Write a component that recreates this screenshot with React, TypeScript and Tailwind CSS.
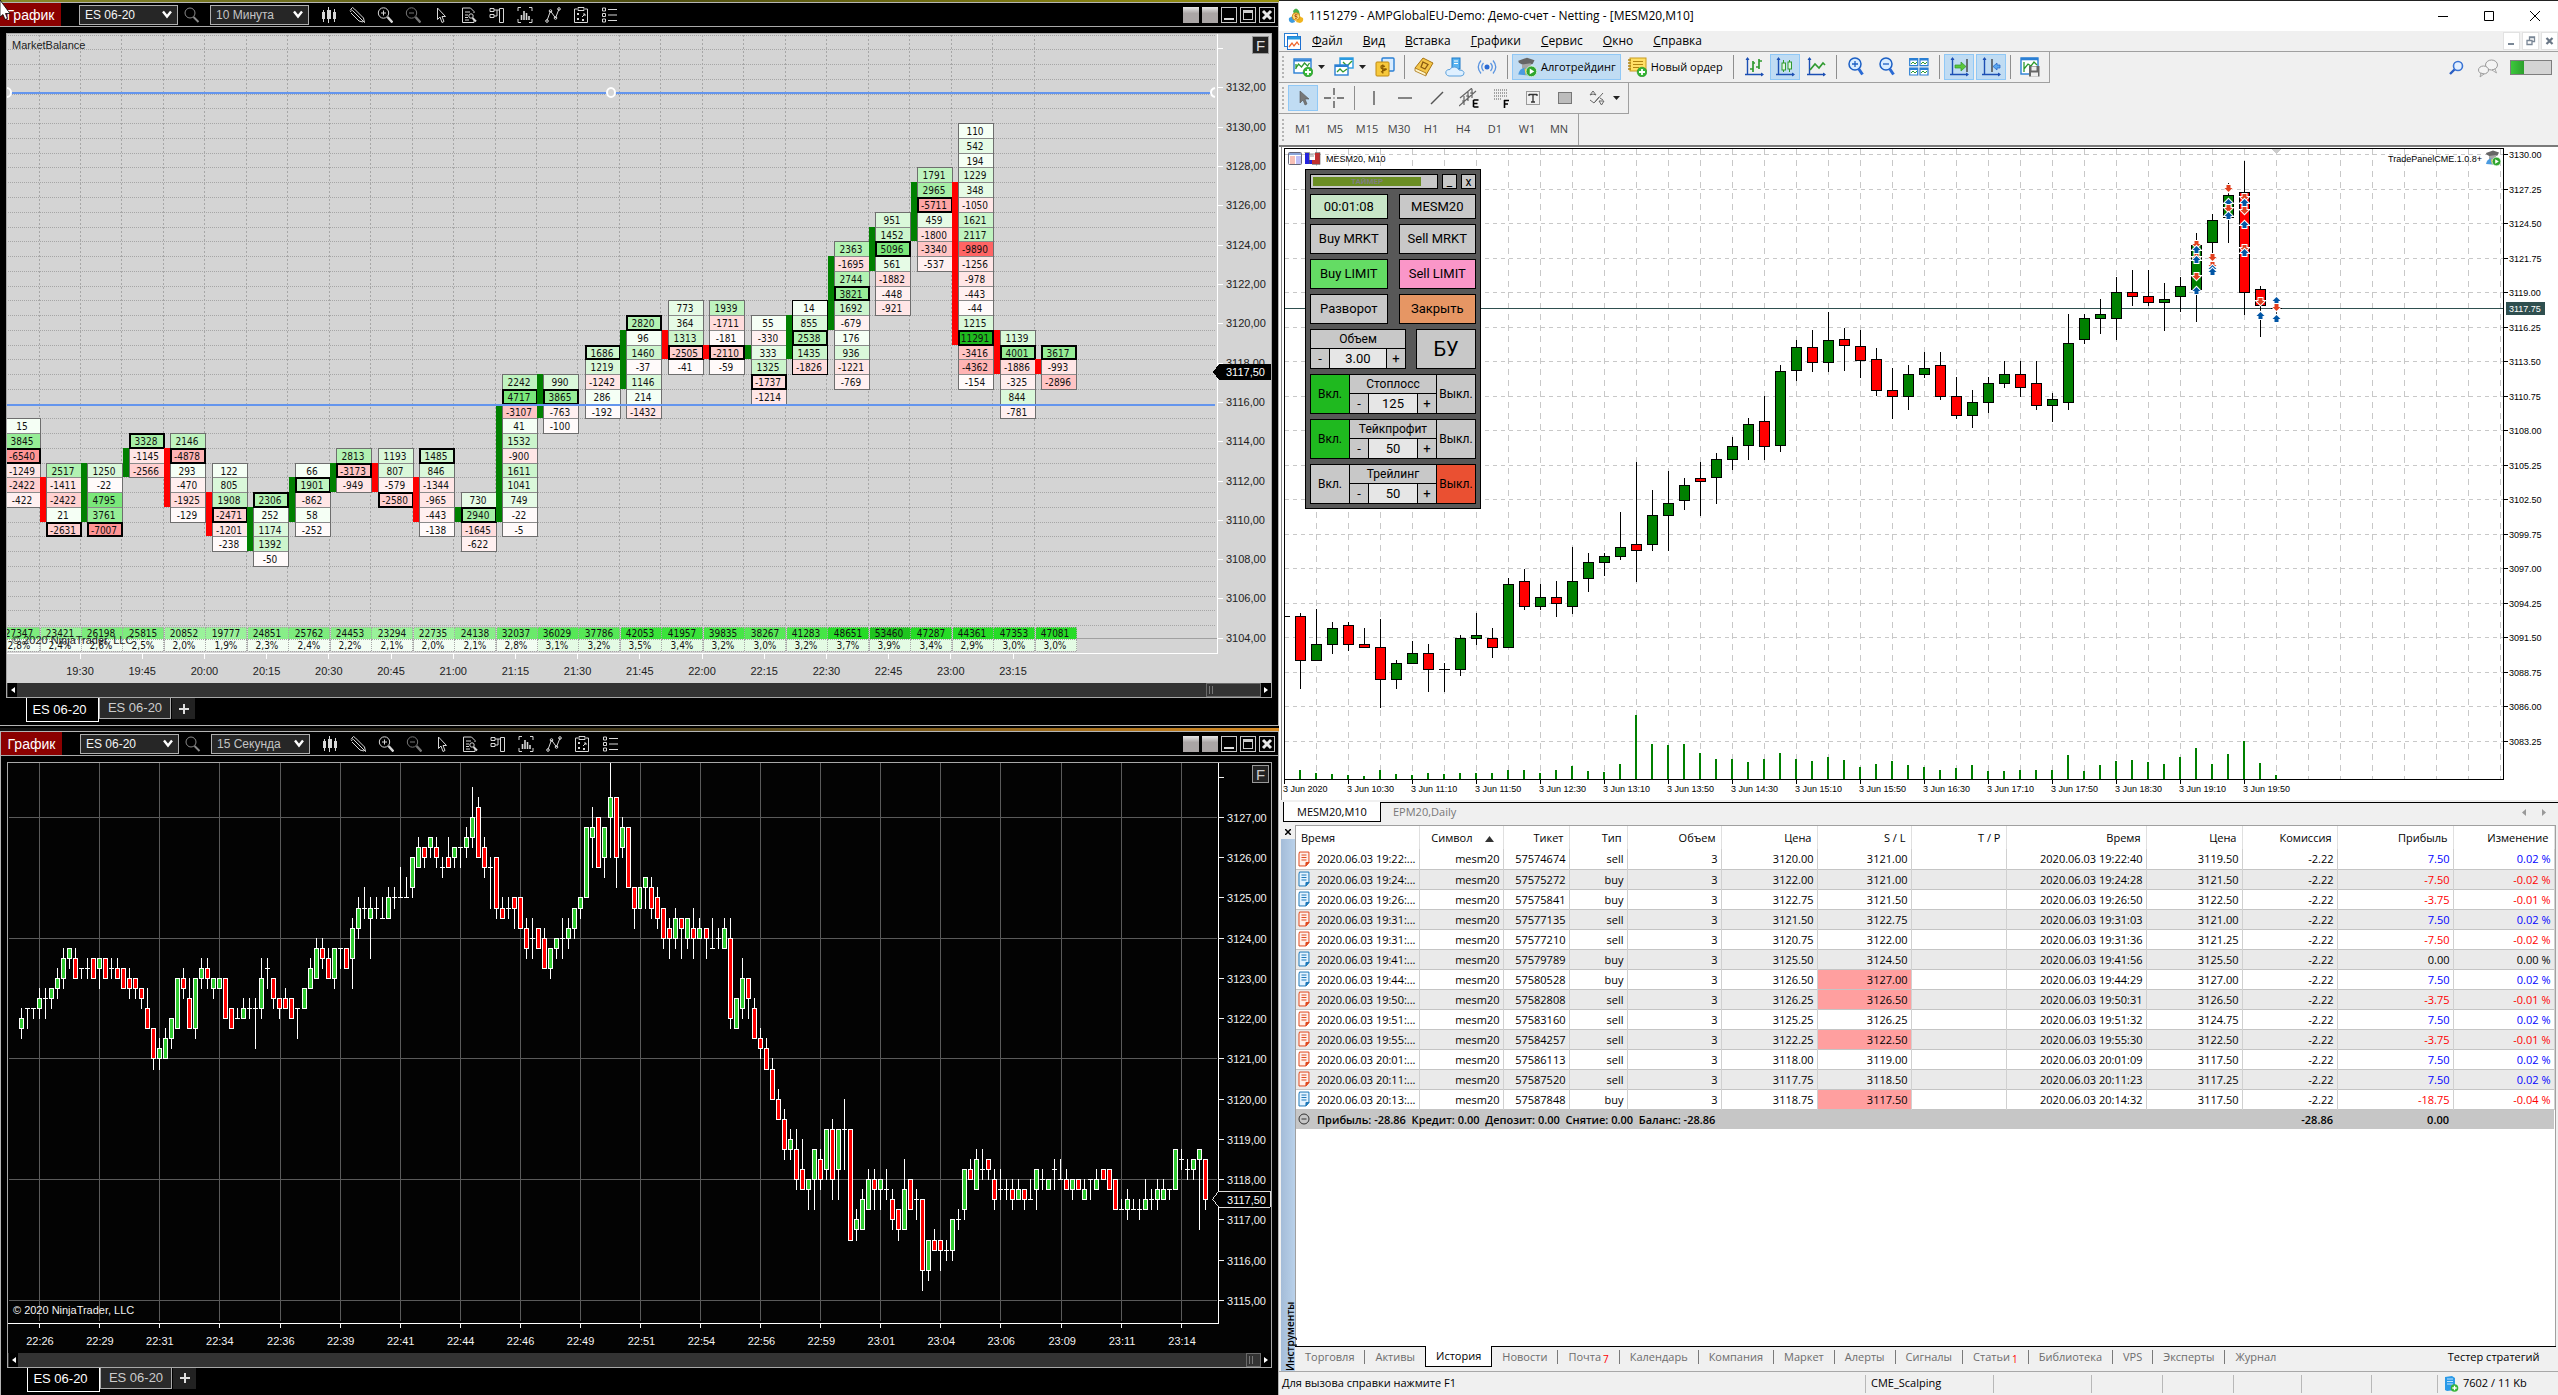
import type { ReactNode } from 'react';

type Bar = [number, number, number, number, number];

/* ---------- footprint chart data: [top row, cells, highlighted cell, bar from, bar to, bar direction] ---------- */
type Column = [number, number[], number, number, number, number];

const COLUMNS: Column[] = [
  [25, [15, 3845, -6540, -1249, -2422, -422], 2, 0, 0, 0],
  [28, [2517, -1411, -2422, 21, -2631], 4, 29, 32, -1],
  [28, [1250, -22, 4795, 3761, -7007], 4, 28, 32, 1],
  [26, [3328, -1145, -2566], 0, 27, 29, 1],
  [26, [2146, -4878, 293, -470, -1925, -129], 1, 27, 31, -1],
  [28, [122, 805, 1908, -2471, -1201, -238], 3, 30, 33, -1],
  [30, [2306, 252, 1174, 1392, -50], 0, 31, 34, 1],
  [28, [66, 1901, -862, 58, -252], 1, 29, 32, 1],
  [27, [2813, -3173, -949], 1, 28, 30, 1],
  [27, [1193, 807, -579, -2580], 3, 28, 30, -1],
  [27, [1485, 846, -1344, -965, -443, -138], 0, 29, 32, -1],
  [30, [730, 2940, -1645, -622], 1, 31, 32, 1],
  [22, [2242, 4717, -3107, 41, 1532, -900, 1611, 1041, 749, -22, -5], 1, 24, 32, 1],
  [22, [990, 3865, -763, -100], 1, 22, 25, 1],
  [20, [1686, 1219, -1242, 286, -192], 0, 0, 0, 0],
  [18, [2820, 96, 1460, -37, 1146, 214, -1432], 0, 19, 23, 1],
  [17, [773, 364, 1313, -2505, -41], 3, 19, 21, -1],
  [17, [1939, -1711, -181, -2110, -59], 3, 20, 21, -1],
  [18, [55, -330, 333, 1325, -1737, -1214], 4, 20, 21, 1],
  [17, [14, 855, 2538, 1435, -1826], 2, 18, 21, 1],
  [13, [2363, -1695, 2744, 3821, 1692, -679, 176, 936, -1221, -769], 3, 14, 19, 1],
  [11, [951, 1452, 5096, 561, -1882, -448, -921], 2, 12, 15, 1],
  [8, [1791, 2965, -5711, 459, -1800, -3340, -537], 2, 9, 13, 1],
  [5, [110, 542, 194, 1229, 348, -1050, 1621, 2117, -9890, -1256, -978, -443, -44, 1215, 11291, -3416, -4362, -154], 14, 9, 20, -1],
  [19, [1139, 4001, -1886, -325, 844, -781], 1, 19, 22, -1],
  [20, [3617, -993, -2896], 0, 21, 22, -1],
];

const VOLUMES = [
  27347, 23421, 26198, 25815, 20852, 19777, 24851, 25762, 24453, 23294, 22735, 24138, 32037,
  36029, 37786, 42053, 41957, 39835, 38267, 41283, 48651, 53460, 47287, 44361, 47353, 47081,
];
const SHARES = [
  '2,8%', '2,4%', '2,6%', '2,5%', '2,0%', '1,9%', '2,3%', '2,4%', '2,2%', '2,1%', '2,0%', '2,1%', '2,8%',
  '3,1%', '3,2%', '3,5%', '3,4%', '3,2%', '3,0%', '3,2%', '3,7%', '3,9%', '3,4%', '2,9%', '3,0%', '3,0%',
];
const TIMES_10M = ['19:30', '19:45', '20:00', '20:15', '20:30', '20:45', '21:00', '21:15', '21:30', '21:45', '22:00', '22:15', '22:30', '22:45', '23:00', '23:15'];

/* ---------- 15 second chart: [high, body top, body bottom, low, direction], ticks below 3127 ---------- */
const TICKS: Bar[] = [
  [19, 20, 21, 22, 1], [19, 19, 19, 21, 0], [19, 19, 19, 20, 0], [17, 18, 19, 20, 1], [17, 18, 18, 20, 0], [17, 17, 18, 19, 1], [15, 16, 17, 18, 1], [13, 14, 16, 17, 1],
  [13, 13, 14, 15, 1], [13, 14, 16, 16, -1], [15, 15, 15, 16, 0], [14, 15, 15, 16, 0], [14, 14, 16, 16, -1], [14, 14, 15, 17, 1], [14, 14, 16, 16, -1], [14, 15, 15, 16, 0],
  [14, 15, 16, 16, -1], [15, 15, 17, 17, -1], [15, 16, 17, 18, -1], [16, 16, 17, 18, -1], [17, 17, 18, 19, -1], [17, 19, 21, 21, -1], [21, 21, 24, 25, -1], [22, 23, 24, 25, 1],
  [21, 22, 24, 24, 1], [20, 20, 22, 23, 1], [16, 16, 21, 21, 1], [15, 16, 17, 18, -1], [16, 18, 21, 21, -1], [16, 16, 21, 22, 1], [14, 15, 16, 17, 1], [14, 15, 16, 17, -1],
  [16, 16, 17, 18, 1], [16, 16, 17, 17, 1], [16, 16, 20, 20, -1], [19, 19, 21, 21, -1], [19, 20, 20, 20, 0], [18, 19, 20, 20, 1], [18, 19, 19, 20, 0], [18, 19, 19, 23, 0],
  [14, 16, 19, 20, 1], [14, 15, 15, 17, 0], [16, 16, 18, 19, -1], [18, 18, 19, 20, -1], [17, 18, 19, 19, -1], [18, 18, 20, 20, -1], [19, 19, 19, 22, 0], [17, 17, 19, 19, 1],
  [14, 15, 17, 17, 1], [12, 13, 16, 16, 1], [12, 13, 14, 15, -1], [13, 14, 16, 16, -1], [13, 13, 16, 17, 1], [13, 13, 13, 15, 0], [13, 13, 15, 15, -1], [10, 11, 14, 17, 1],
  [8, 9, 11, 12, 1], [7, 9, 9, 10, 0], [8, 9, 10, 14, 1], [8, 9, 9, 10, 0], [8, 10, 10, 10, 0], [7, 8, 10, 10, 1], [7, 8, 8, 9, 0], [5, 8, 8, 8, 0],
  [6, 8, 8, 8, 0], [4, 4, 7, 8, 1], [2, 3, 5, 5, 1], [3, 3, 4, 5, -1], [2, 2, 3, 4, 1], [2, 3, 4, 5, -1], [4, 5, 5, 6, 0], [2, 4, 5, 5, -1],
  [3, 3, 4, 5, 1], [3, 3, 3, 5, 0], [1, 2, 3, 4, 1], [-3, 0, 2, 3, 1], [-2, -1, 4, 4, -1], [2, 3, 5, 6, -1], [4, 5, 5, 9, 0], [4, 4, 9, 10, -1],
  [8, 9, 10, 10, -1], [8, 9, 9, 10, 0], [8, 8, 9, 11, -1], [8, 8, 11, 11, -1], [10, 11, 13, 14, -1], [10, 12, 12, 14, 0], [11, 11, 13, 13, -1], [11, 12, 15, 15, -1],
  [13, 13, 15, 16, 1], [12, 12, 13, 14, 1], [10, 12, 12, 14, 0], [10, 11, 12, 13, 1], [9, 9, 11, 12, 1], [8, 8, 9, 10, 1], [1, 1, 8, 8, 1], [-1, 1, 2, 5, 1],
  [0, 0, 5, 5, -1], [1, 1, 4, 6, 1], [-6, -2, 0, 4, 1], [-2, -2, 4, 7, -1], [0, 1, 3, 4, 1], [1, 1, 7, 7, -1], [7, 7, 9, 11, -1], [5, 7, 9, 10, 1],
  [6, 6, 7, 9, 1], [6, 7, 9, 10, -1], [7, 8, 10, 11, -1], [9, 9, 12, 13, -1], [10, 11, 12, 14, -1], [9, 10, 12, 13, 1], [10, 10, 11, 14, -1], [10, 10, 12, 13, 1],
  [9, 11, 12, 14, -1], [10, 11, 12, 12, 1], [11, 11, 12, 14, -1], [10, 13, 13, 13, 0], [11, 12, 12, 13, 0], [10, 11, 13, 13, 1], [10, 12, 20, 21, -1], [18, 18, 21, 21, 1],
  [14, 16, 19, 20, 1], [16, 16, 18, 20, -1], [18, 19, 22, 22, -1], [21, 22, 23, 24, -1], [22, 23, 25, 25, -1], [24, 25, 28, 28, -1], [27, 28, 30, 30, -1], [29, 30, 33, 34, -1],
  [31, 32, 33, 34, 1], [31, 33, 36, 37, -1], [32, 35, 37, 37, -1], [36, 36, 37, 39, 1], [33, 33, 36, 39, 1], [33, 34, 36, 37, -1], [31, 31, 35, 36, 1], [30, 31, 36, 38, -1],
  [31, 31, 35, 38, 1], [28, 31, 31, 35, 0], [31, 31, 42, 42, -1], [39, 40, 41, 42, 1], [37, 38, 41, 41, 1], [35, 36, 39, 39, 1], [35, 36, 37, 39, -1], [36, 36, 37, 39, 1],
  [35, 37, 37, 38, 0], [37, 38, 40, 41, -1], [39, 39, 41, 42, -1], [34, 37, 41, 41, 1], [36, 36, 39, 39, -1], [37, 38, 38, 40, 0], [38, 38, 45, 47, -1], [42, 42, 45, 46, 1],
  [41, 42, 43, 43, -1], [42, 42, 43, 45, -1], [42, 43, 43, 44, 0], [40, 40, 43, 44, 1], [39, 40, 40, 41, 0], [35, 35, 39, 40, 1], [34, 35, 36, 36, -1], [33, 34, 37, 37, 1],
  [33, 35, 35, 36, 0], [34, 34, 35, 36, -1], [35, 36, 38, 39, -1], [35, 37, 37, 38, 0], [36, 37, 37, 38, 0], [36, 37, 38, 39, -1], [36, 37, 38, 38, 1], [37, 37, 38, 39, -1],
  [36, 38, 38, 38, 0], [35, 35, 37, 39, 1], [35, 36, 36, 37, 0], [36, 36, 37, 37, 1], [34, 35, 35, 37, 0], [34, 36, 36, 36, 0], [35, 36, 37, 37, -1], [36, 36, 37, 38, 1],
  [36, 36, 37, 37, -1], [36, 37, 38, 38, 1], [36, 36, 36, 38, 0], [35, 36, 37, 37, 1], [35, 35, 36, 36, -1], [35, 35, 37, 37, -1], [36, 36, 39, 39, -1], [38, 39, 39, 39, 0],
  [37, 38, 39, 40, 1], [38, 39, 39, 39, 0], [38, 39, 39, 40, 0], [36, 38, 39, 39, 1], [37, 38, 38, 39, 0], [36, 37, 38, 39, 1], [36, 37, 38, 38, 1], [37, 37, 37, 38, 0],
  [33, 33, 37, 37, 1], [33, 34, 34, 35, 0], [34, 35, 35, 36, 0], [34, 34, 35, 36, 1], [33, 33, 34, 41, 1], [34, 34, 38, 39, -1],
];
const TIMES_15S = ['22:26', '22:29', '22:31', '22:34', '22:36', '22:39', '22:41', '22:44', '22:46', '22:49', '22:51', '22:54', '22:56', '22:59', '23:01', '23:04', '23:06', '23:09', '23:11', '23:14'];

/* ---------- MESM20 chart: [high, body top, body bottom, low, direction] in chart units ---------- */
const CANDLES: Bar[] = [
  [613, 616, 661, 689, -1], [609, 644, 661, 661, 1], [622, 628, 645, 654, 1], [622, 625, 645, 651, -1], [628, 644, 648, 648, -1], [619, 647, 680, 708, -1],
  [660, 663, 680, 689, 1], [641, 653, 664, 664, 1], [644, 653, 670, 692, -1], [663, 669, 669, 692, 0], [635, 638, 670, 676, 1], [613, 635, 639, 645, 1],
  [628, 638, 648, 658, -1], [578, 584, 648, 648, 1], [569, 581, 607, 610, -1], [584, 597, 607, 610, 1], [581, 597, 604, 617, -1], [547, 581, 607, 614, 1],
  [553, 562, 579, 592, 1], [553, 556, 563, 576, 1], [512, 547, 557, 560, 1], [462, 544, 551, 582, -1], [490, 515, 545, 551, 1], [471, 503, 516, 551, 1],
  [478, 485, 501, 510, 1], [462, 478, 482, 516, -1], [453, 459, 478, 504, 1], [437, 446, 460, 470, 1], [418, 424, 446, 460, 1], [396, 421, 447, 460, -1],
  [365, 371, 446, 452, 1], [340, 347, 371, 381, 1], [330, 347, 363, 372, -1], [312, 340, 363, 372, 1], [328, 339, 346, 371, -1], [330, 346, 361, 378, -1],
  [348, 359, 391, 396, -1], [368, 390, 397, 419, -1], [365, 374, 397, 410, 1], [352, 368, 375, 378, 1], [352, 365, 397, 400, -1], [377, 396, 416, 419, -1],
  [390, 402, 416, 428, 1], [377, 383, 403, 413, 1], [361, 374, 384, 388, 1], [361, 374, 388, 397, -1], [361, 383, 406, 410, -1], [393, 399, 406, 422, 1],
  [314, 343, 403, 410, 1], [314, 318, 340, 344, 1], [299, 314, 319, 334, 1], [277, 292, 319, 340, 1], [270, 292, 297, 306, -1], [270, 296, 303, 306, -1],
  [283, 299, 303, 331, 1], [277, 286, 297, 312, 1], [233, 245, 290, 322, 1], [214, 220, 243, 253, 1], [183, 195, 218, 243, 1], [161, 192, 293, 315, -1],
  [286, 289, 306, 337, -1], [296, 308, 308, 315, 0],
];
const MT_VOLUMES = [
  9, 6, 5, 4, 3, 9, 5, 4, 6, 5, 6, 6, 6, 9, 9, 6, 9, 13, 8, 7, 15, 64, 35, 34, 35, 26, 20, 20, 17, 20, 26,
  20, 18, 22, 19, 12, 15, 18, 14, 12, 9, 11, 14, 8, 8, 9, 9, 9, 24, 8, 14, 18, 19, 17, 15, 22, 31, 15, 25, 38, 16, 4,
];
const MT_TIMES = ['10:30', '11:10', '11:50', '12:30', '13:10', '13:50', '14:30', '15:10', '15:50', '16:30', '17:10', '17:50', '18:30', '19:10', '19:50'];

/* deal marks: [bar, y, side] */
const DEALS: [number, number, number][] = [
  [56, 244, -1], [56, 250, 1], [56, 257, -1], [56, 260, 1], [56, 276, -1], [56, 291, 1],
  [57, 257, -1], [57, 265, -1], [57, 269, 1], [57, 272, 1],
  [58, 188, -1], [58, 203, 1], [58, 208, -1], [58, 216, 1],
  [59, 197, -1], [59, 203, 1], [59, 210, -1], [59, 225, 1], [59, 248, -1], [59, 253, 1],
  [60, 301, -1], [60, 316, 1],
  [61, 301, 1], [61, 307, -1], [61, 319, 1],
];

const TRADES = [
  ['2020.06.03 19:22:...', '57574674', 'sell', '3120.00', '3121.00', '2020.06.03 19:22:40', '3119.50', '7.50', '0.02 %', ''],
  ['2020.06.03 19:24:...', '57575272', 'buy', '3122.00', '3121.00', '2020.06.03 19:24:28', '3121.50', '-7.50', '-0.02 %', ''],
  ['2020.06.03 19:26:...', '57575841', 'buy', '3122.75', '3121.50', '2020.06.03 19:26:50', '3122.50', '-3.75', '-0.01 %', ''],
  ['2020.06.03 19:31:...', '57577135', 'sell', '3121.50', '3122.75', '2020.06.03 19:31:03', '3121.00', '7.50', '0.02 %', ''],
  ['2020.06.03 19:31:...', '57577210', 'sell', '3120.75', '3122.00', '2020.06.03 19:31:36', '3121.25', '-7.50', '-0.02 %', ''],
  ['2020.06.03 19:41:...', '57579789', 'buy', '3125.50', '3124.50', '2020.06.03 19:41:56', '3125.50', '0.00', '0.00 %', ''],
  ['2020.06.03 19:44:...', '57580528', 'buy', '3126.50', '3127.00', '2020.06.03 19:44:29', '3127.00', '7.50', '0.02 %', 'hit'],
  ['2020.06.03 19:50:...', '57582808', 'sell', '3126.25', '3126.50', '2020.06.03 19:50:31', '3126.50', '-3.75', '-0.01 %', 'hit'],
  ['2020.06.03 19:51:...', '57583160', 'sell', '3125.25', '3126.25', '2020.06.03 19:51:32', '3124.75', '7.50', '0.02 %', ''],
  ['2020.06.03 19:55:...', '57584257', 'sell', '3122.25', '3122.50', '2020.06.03 19:55:30', '3122.50', '-3.75', '-0.01 %', 'hit'],
  ['2020.06.03 20:01:...', '57586113', 'sell', '3118.00', '3119.00', '2020.06.03 20:01:09', '3117.50', '7.50', '0.02 %', ''],
  ['2020.06.03 20:11:...', '57587520', 'sell', '3117.75', '3118.50', '2020.06.03 20:11:23', '3117.25', '7.50', '0.02 %', ''],
  ['2020.06.03 20:13:...', '57587848', 'buy', '3118.75', '3117.50', '2020.06.03 20:14:32', '3117.50', '-18.75', '-0.04 %', 'hit'],
];

const ARIAL = "font-['Liberation_Sans',Arial,sans-serif]";
const SEGOE = "font-['Open_Sans','Noto_Sans',sans-serif]";

function cellColor(v: number) {
  const up: [number, string][] = [[300, '#f5fff5'], [800, '#e6fbe6'], [1250, '#daf8da'], [1750, '#ccf5cc'], [2250, '#bff3bf'], [2850, '#b2f2b2'], [3400, '#a6efa6'], [4300, '#96ed96'], [6000, '#7ae87a'], [99999, '#1fba1f']];
  const down: [number, string][] = [[260, '#fffafa'], [800, '#fff0f0'], [1450, '#ffe6e6'], [2000, '#ffdcdc'], [2700, '#ffd0d0'], [3600, '#ffc4c4'], [5000, '#ffb4b4'], [6000, '#ffa5a5'], [8000, '#ff9494'], [99999, '#ff6464']];
  const scale = v >= 0 ? up : down;
  return scale.find(([limit]) => Math.abs(v) <= limit)![1];
}

function volumeColor(v: number) {
  if (v > 50000) return '#1fc41f';
  if (v > 44000) return '#26dc26';
  if (v > 41500) return '#3ae33a';
  if (v > 38500) return '#46e646';
  if (v > 34000) return '#56e856';
  if (v > 30000) return '#6aea6a';
  if (v > 25500) return '#7dec7d';
  if (v > 24000) return '#88ee88';
  return '#9af29a';
}

function FootprintChart() {
  const rowY = (r: number) => Math.round(49.4 + 14.76 * r);
  const colX = (c: number) => Math.round(38.5 + 41.46 * c);
  const priceY = (p: number) => Math.round(637.8 - (p - 3104) * 19.66);
  return (
    <svg viewBox="7 34 1264 649" className={`block w-full h-auto bg-[#d4d4d4] text-[11px] ${ARIAL}`} shapeRendering="crispEdges">
      <g stroke="#a6a6a6" strokeDasharray="1 1">
        {Array.from({ length: 41 }, (_, i) => <line key={i} x1="8" x2="1215" y1={rowY(i - 1) + 0.5} y2={rowY(i - 1) + 0.5} />)}
        {Array.from({ length: 25 }, (_, i) => <line key={i} x1={colX(i) + 0.5} x2={colX(i) + 0.5} y1="35" y2="651" strokeDasharray="2 2" />)}
      </g>
      <line x1="7" x2="1217" y1="638.5" y2="638.5" stroke="#a0a0a0" />
      <text x="12" y="49" fill="#222">MarketBalance</text>

      {COLUMNS.map(([top, cells, mark, from, to, dir], c) => {
        const right = colX(c) + 1;
        const left = right - 35;
        const frame = c === 19 ? '#000' : '#6e6e6e';
        return (
          <g key={c}>
            {dir !== 0 && <rect x={left - 6} width="6" y={rowY(from)} height={rowY(to) - rowY(from)} fill={dir > 0 ? '#008000' : '#ff0000'} />}
            {cells.map((v, i) => (
              <rect key={i} x={left} width="35" y={rowY(top + i)} height={rowY(top + i + 1) - rowY(top + i) + 1} fill={cellColor(v)} stroke="none" />
            ))}
            {cells.map((v, i) => (
              <line key={i} x1={left} x2={right} y1={rowY(top + i) + 0.5} y2={rowY(top + i) + 0.5} stroke="#8a8a8a" />
            ))}
            <rect x={left + 0.5} width="35" y={rowY(top) + 0.5} height={rowY(top + cells.length) - rowY(top)} fill="none" stroke={frame} />
            <rect x={left + 1} width="34" y={rowY(top + mark) + 1} height={rowY(top + mark + 1) - rowY(top + mark) - 1} fill="none" stroke="#000" strokeWidth="2" />
          </g>
        );
      })}

      {/* column totals */}
      {VOLUMES.map((v, c) => (
        <g key={c} stroke="#a6a6a6" strokeDasharray="1 1">
          <rect x={colX(c - 1) + 1.5} width="41" y="627" height="12" fill={volumeColor(v)} />
          <rect x={colX(c - 1) + 1.5} width="41" y="639" height="12" fill={v > 36000 ? '#e4fbe4' : '#f3fdf3'} />
        </g>
      ))}
      <g className="font-['DejaVu_Sans_Condensed','DejaVu_Sans',sans-serif] text-[10px]" textAnchor="middle" fill="#111">
        {COLUMNS.map(([top, cells], c) => cells.map((v, i) => (
          <text key={`${c}-${i}`} x={colX(c) - 17} y={rowY(top + i) + 12}>{v}</text>
        )))}
        {VOLUMES.map((v, c) => <text key={c} x={colX(c) - 20} y="637">{v}</text>)}
        {SHARES.map((s, c) => <text key={c} x={colX(c) - 20} y="649">{s}</text>)}
      </g>
      <text x="12" y="644" fill="#222">© 2020 NinjaTrader, LLC</text>

      {/* horizontal levels */}
      <rect x="7" y="92" width="1206" height="2" fill="#6495ed" />
      <rect x="7" y="404" width="1208" height="2" fill="#6495ed" />
      <g fill="#d4d4d4" stroke="#fff" strokeWidth="2" shapeRendering="auto">
        <ellipse cx="7" cy="92.5" rx="4" ry="4.5" />
        <ellipse cx="611" cy="92.5" rx="4" ry="4.5" />
        <path d="M1215 88q-4 1-4 4.500q0 3.500 4 4.500" />
      </g>

      <path d="M1217.500 34V653.500H7" fill="none" stroke="#fff" />
      {Array.from({ length: 16 }, (_, i) => 3104 + i * 2).map((p) => (
        <g key={p}>
          <line x1="1217" x2="1223" y1={priceY(p) + 0.5} y2={priceY(p) + 0.5} stroke="#fff" />
          {p < 3134 && <text x="1226" y={priceY(p) + 4} fill="#222">{`${p},00`}</text>}
        </g>
      ))}
      <path d="M1213 372l6-8h52v16h-52z" fill="#000" />
      <text x="1226" y="376" fill="#fff">3117,50</text>
      {TIMES_10M.map((t, i) => (
        <g key={t}>
          <line x1={Math.round(79.6 + i * 62.2) + 0.5} x2={Math.round(79.6 + i * 62.2) + 0.5} y1="654" y2="659" stroke="#fff" />
          <text x={80 + i * 62.2} y="675" textAnchor="middle" fill="#222">{t}</text>
        </g>
      ))}
      <rect x="1252.500" y="36.500" width="16" height="17" fill="#222" stroke="#999" />
      <text x="1256" y="51" fill="#ddd" className="text-[15px]">F</text>
    </svg>
  );
}

function SecondsChart() {
  const tickY = (n: number) => Math.round(817 + n * 10.06);
  const barX = (k: number) => Math.round(20.8 + k * 6.015);
  const gridX = (i: number) => Math.round(39 + i * 60.15);
  return (
    <svg viewBox="8 763 1264 590" className={`block w-full h-auto bg-[#030303] text-[11px] ${ARIAL}`} shapeRendering="crispEdges">
      <g stroke="#5a5a5a">
        {TIMES_15S.map((t, i) => <line key={t} x1={gridX(i) + 0.5} x2={gridX(i) + 0.5} y1="763" y2="1321" />)}
        {[0, 12, 24, 36, 48].map((n) => <line key={n} x1="9" x2="1218" y1={tickY(n) + 0.5} y2={tickY(n) + 0.5} />)}
      </g>
      {TICKS.map(([high, top, bottom, low, dir], k) => {
        const x = barX(k);
        const y = tickY(top);
        const h = tickY(bottom) - y + 1;
        return (
          <g key={k}>
            <rect x={x} width="1" y={tickY(high)} height={tickY(low) - tickY(high) + 1} fill="#fff" />
            <rect x={x - 2} width="5" y={y} height={h} fill="#fff" />
            {dir !== 0 && <rect x={x - 1} width="3" y={y + 1} height={h - 2} fill={dir > 0 ? '#32cd32' : '#ff0000'} />}
          </g>
        );
      })}
      <path d="M1219.500 763V1323.500H8" fill="none" stroke="#fff" />
      <g fill="#f2f2f2">
        {Array.from({ length: 14 }, (_, i) => 3128 - i).map((p) => (
          <g key={p}>
            <rect x="1219" width="6" y={tickY((3127 - p) * 4)} height="1" />
            {p < 3128 && <text x="1228" y={tickY((3127 - p) * 4) + 5}>{`${p},00`}</text>}
          </g>
        ))}
        {TIMES_15S.map((t, i) => (
          <g key={t}>
            <rect x={gridX(i)} width="1" y="1324" height="4" />
            <text x={gridX(i) + 1} y="1345" textAnchor="middle">{t}</text>
          </g>
        ))}
        <text x="13" y="1314">© 2020 NinjaTrader, LLC</text>
      </g>
      <path d="M1213.500 1199.500l6-8h52v16h-52z" fill="#000" stroke="#ddd" />
      <text x="1228" y="1204" fill="#fff">3117,50</text>
      <rect x="1253.500" y="765.500" width="16" height="17" fill="#222" stroke="#999" />
      <text x="1257" y="780" fill="#ccc" className="text-[15px]">F</text>
    </svg>
  );
}

/* ---------- NinjaTrader window ---------- */
const TOOLS: [string, ReactNode, boolean?][] = [
  ['Стиль графика', <g fill="currentColor" stroke="none"><path d="M1 5h3v7H1zM2 3h1v12H2zM6 3h4v9H6zM7 0h1v16H7zM12 5h3v7h-3zM13 2h1v13h-1z" /></g>],
  ['Рисование', <><path d="M3.500 3.500l9 9 3 3-1-4.500-9-9-2-1.500-2 2zM2 6l8 8 4 1M5 5l8 8M1 3.500l1 1.500" /></>],
  ['Увеличить', <><circle cx="6.500" cy="6" r="5.200" /><path d="M6.500 3.500v5M4 6h5" /><path d="M10.500 10l5 5.500" strokeWidth="2.500" /></>],
  ['Уменьшить', <><circle cx="6.500" cy="6" r="5.200" /><path d="M4 6h5" /><path d="M10.500 10l5 5.500" strokeWidth="2.500" /></>, true],
  ['Курсор', <path d="M4.500 1v11.500l2.500-2.500 2 5.500 2-1-2-5h3.500z" />],
  ['Данные', <><path d="M13 12.500v3H1.500V1h8l3.500 3.500V6M4 5h5M4 8h3M4 10.500h3M4 13h4" /><circle cx="10" cy="9" r="2.200" /><path d="M11.500 11l3.500 3.500" strokeWidth="2" /></>],
  ['Трейдер', <><path d="M10.500 1.500h4v14h-4zM1 1.500h4v3H1zM1 7.500h4v3H1zM5 3h5.500M5 9h3V3" /></>],
  ['Индикаторы', <><path d="M1 4V.5h3M12 .5h3V4M15 12v3.500h-3M4 15.500H1V12" /><path d="M4.500 13V8M7 13V4M9.500 13V6M12 13V9" strokeWidth="1.600" /></>],
  ['Стратегии', <><path d="M2 13.500L5.500 4l5 7L14 2" /><circle cx="2" cy="14" r="1.300" /><circle cx="5.500" cy="4" r="1.300" /><circle cx="10.500" cy="11" r="1.300" /><circle cx="14" cy="2" r="1.300" /></>],
  ['Анализ', <><path d="M4 2H1.500v13.500h13V2H12M5 .5h6v3H5zM4 6l2 2M6 6L4 8M9 10l3-3M12 9V7h-2M4 11l2 2M6 11l-2 2M9 12l2 2M11 12l-2 2" /></>],
  ['Свойства', <><path d="M1.500 1h3v3h-3zM1.500 6.500h3v3h-3zM1.500 12h3v3h-3zM7 2.500h9M7 8h9M7 13.500h9" /></>],
];

function HeaderSelect({ label, value, dim }: { label: string; value: string; dim?: boolean }) {
  return (
    <label className="relative block">
      <select aria-label={label} className={`block h-5 w-[99px] appearance-none border border-[#b0b0b0] bg-[#262626] pl-[5px] text-xs ${dim ? 'text-[#c4c4c4]' : 'text-[#f5f5f5]'}`}>
        <option>{value}</option>
      </select>
      <svg viewBox="0 0 10 9" className="pointer-events-none absolute right-[6px] top-[5px] h-[9px] w-[10px]" fill="none" stroke="#fff" strokeWidth="2.400"><path d="M1 1.500l4 5 4-5" /></svg>
    </label>
  );
}

function NinjaWindow({ interval, children, className, thumb }: { interval: string; children: ReactNode; className: string; thumb: string }) {
  return (
    <section className={`flex flex-col border-t border-r border-[#b4b4b4] bg-black text-[#e6e6e6] ${ARIAL} ${className}`}>
      <header className="flex h-6 items-center border-b border-[#a8a8a8]">
        <h2 className="flex h-full w-[61px] items-center justify-center bg-[#8b0000] text-sm text-white">График</h2>
        <div className="ml-[18px]"><HeaderSelect label="Инструмент" value="ES 06-20" /></div>
        <button aria-label="Поиск" className="ml-1.5 mr-2.5 text-[#8a8a8a]">
          <svg viewBox="0 0 16 16" className="h-4 w-4" fill="none" stroke="currentColor"><circle cx="6" cy="6" r="5" /><path d="M9.500 10l5 5" strokeWidth="2" /></svg>
        </button>
        <HeaderSelect label="Интервал" value={interval} dim />
        <div className="ml-3 flex gap-3">
          {TOOLS.map(([name, icon, off]) => (
            <button key={name} aria-label={name} className={off ? 'text-[#777]' : 'text-[#d8d8d8]'}>
              <svg viewBox="0 0 16 16" className="h-4 w-4" fill="none" stroke="currentColor">{icon}</svg>
            </button>
          ))}
        </div>
        <div className="ml-auto flex gap-[3px] pr-[3px]">
          <button aria-label="Связь инструмента" className="h-4 w-4 bg-linear-to-b from-[#e8e8e8] to-[#aaa5a5] to-40%" />
          <button aria-label="Связь интервала" className="h-4 w-4 bg-linear-to-b from-[#e8e8e8] to-[#aaa5a5] to-40%" />
          <button aria-label="Свернуть" className="h-4 w-4 border border-[#c8c8c8]"><svg viewBox="0 0 14 14" className="block"><path d="M2 10h10v2H2z" fill="#ddd" /></svg></button>
          <button aria-label="Развернуть" className="h-4 w-4 border border-[#c8c8c8]"><svg viewBox="0 0 14 14" className="block"><path d="M2 2h10v10H2zM3 5v6h8V5z" fill="#ccc" fillRule="evenodd" /></svg></button>
          <button aria-label="Закрыть окно" className="h-4 w-4 border border-[#c8c8c8]"><svg viewBox="0 0 14 14" className="block"><path d="M3 3l8 8M11 3l-8 8" stroke="#e8e8e8" strokeWidth="3" /></svg></button>
        </div>
      </header>
      <div className="px-1.5 pt-1.5">
        <div className="border border-[#a8a8a8]">
          {children}
          <div className="flex h-3.5 items-stretch bg-[#333]">
            <button aria-label="Прокрутить влево" className="ml-px flex w-[9px] items-center justify-center bg-black"><svg viewBox="0 0 4 6" className="h-1.5 w-1"><path d="M4 0v6L0 3z" fill="#fff" /></svg></button>
            <div className={`ml-auto flex items-center gap-0.5 border border-[#6a6a6a] pl-0.5 ${thumb}`}>
              <span className="h-2 w-px bg-[#777]" /><span className="h-2 w-px bg-[#777]" />
            </div>
            <button aria-label="Прокрутить вправо" className="flex w-2.5 items-center justify-center bg-black"><svg viewBox="0 0 4 6" className="h-1.5 w-1"><path d="M0 0v6l4-3z" fill="#fff" /></svg></button>
          </div>
        </div>
        <nav className="ml-5 flex items-start pb-[3px] text-[13px]">
          <button className="h-6 w-[73px] border border-t-0 border-white bg-black pr-1.5 text-white">ES 06-20</button>
          <button className="h-[21px] w-[72px] border border-t-0 border-[#aaa] bg-[#2a2a2a] text-[#ccc]">ES 06-20</button>
          <button aria-label="Новая вкладка" className="ml-px flex h-[21px] w-[23px] items-center justify-center bg-[#222]"><svg viewBox="0 0 10 10" className="h-2.5 w-2.5"><path d="M4 0h2v4h4v2H6v4H4V6H0V4h4z" fill="#ddd" /></svg></button>
        </nav>
      </div>
    </section>
  );
}

/* ---------- MetaTrader chart ---------- */
function MetaChart() {
  const barX = (k: number) => 1300 + k * 16;
  const gridY = (i: number) => Math.round(154 + i * 34.53);
  return (
    <svg viewBox="1279 147 1279 653" className={`block w-full h-auto bg-white text-[9px] ${ARIAL}`} shapeRendering="crispEdges">
      <rect x="1281" y="147" width="1" height="653" fill="#888" />
      <g stroke="#c8c8c8">
        {Array.from({ length: 18 }, (_, i) => <line key={i} x1="1285" x2="2503" y1={gridY(i) + 0.5} y2={gridY(i) + 0.5} strokeDasharray="4 4" />)}
        {Array.from({ length: 38 }, (_, i) => <line key={i} x1={1316.5 + i * 32} x2={1316.5 + i * 32} y1="149" y2="779" strokeDasharray="6 5" />)}
      </g>
      <path d="M2271 149h10l-5 5z" fill="#ccc" />
      {MT_VOLUMES.map((v, k) => <rect key={k} x={barX(k) - 1} width="2" y={779 - v} height={v} fill="#008000" />)}
      <rect x="1284" y="308" width="1220" height="1" fill="#2f4f4f" />
      <rect x="1284" y="616" width="6" height="1" fill="#000" />
      {CANDLES.map(([high, top, bottom, low, dir], k) => (
        <g key={k}>
          <rect x={barX(k)} width="1" y={high} height={low - high} fill="#000" />
          <rect x={barX(k) - 5} width="11" y={top} height={Math.max(bottom - top, 1)} fill="#000" />
          {dir !== 0 && <rect x={barX(k) - 4} width="9" y={top + 1} height={bottom - top - 2} fill={dir > 0 ? '#008000' : '#ff0000'} />}
        </g>
      ))}
      {DEALS.map(([k, y, side], i) => (
        <path
          key={i}
          d={side > 0 ? 'M0-4l4 4h-2v3h-4v-3h-2z' : 'M0 4l4-4h-2v-3h-4v3h-2z'}
          transform={`translate(${barX(k) + 0.5} ${y})`}
          fill={side > 0 ? '#0055a5' : '#e1401e'}
          stroke="#fff"
          strokeWidth="2"
          paintOrder="stroke"
          shapeRendering="auto"
        />
      ))}
      <path d="M1284.500 779V148.500H2503.500V779.500H1284" fill="none" stroke="#000" />
      {Array.from({ length: 18 }, (_, i) => (
        <g key={i}>
          <rect x="2504" width="4" y={gridY(i)} height="1" />
          <text x="2509" y={gridY(i) + 4}>{(3130 - i * 2.75).toFixed(2)}</text>
        </g>
      ))}
      <rect x="2506" y="302" width="39" height="13" fill="#2f4f4f" />
      <text x="2509" y="312" fill="#fff">3117.75</text>
      <rect x="1284" y="779" width="1" height="5" />
      <text x="1283" y="792">3 Jun 2020</text>
      {MT_TIMES.map((t, i) => (
        <g key={t}>
          <rect x={1348 + i * 64} y="779" width="1" height="5" />
          <text x={1347 + i * 64} y="792">{`3 Jun ${t}`}</text>
        </g>
      ))}
      <g shapeRendering="auto">
        <rect x="1288.500" y="152.500" width="13" height="12" rx="1" fill="#fff" stroke="#667" />
        <rect x="1289" y="153" width="12" height="2" fill="#8aa4d8" />
        <path d="M1290 157h5M1290 159h5M1290 161h5M1290 163h5" stroke="#f0816e" />
        <path d="M1296 157h5M1296 159h5M1296 161h5M1296 163h5" stroke="#8080ee" />
        <path d="M1305 153h4v7h3v4h-7z" fill="#2222dd" />
        <path d="M1319 153h-4v7h-3v4h8v-11z" fill="#c03030" />
        <path d="M1309 154h6M1310 156h4" stroke="#999" />
        <path d="M1304.500 152.500h5v11.500M1315 152.500h5v12h-8" fill="none" stroke="#555" strokeWidth=".6" />
      </g>
      <text x="1326" y="162">MESM20, M10</text>
      <text x="2482" y="162" textAnchor="end">TradePanelCME.1.0.8+</text>
      <g transform="translate(2485 150)" shapeRendering="auto"><HatIcon /></g>
    </svg>
  );
}

function HatIcon() {
  return (
    <>
      <path d="M1 3l7-2.500 6 2-1.500 3L6 7 1.500 4.500z" fill="#666" />
      <path d="M4 6l7-1v4l-3 1.500L4 9z" fill="#a5a5a5" />
      <path d="M1 14q1-5 5-5.500l4 1 3 5.500z" fill="#4a9be0" />
      <path d="M6 9l3 1-2 5z" fill="#f4c430" />
      <circle cx="11.500" cy="11.500" r="4.300" fill="#2fa52f" stroke="#e8ffe8" strokeWidth=".6" />
      <path d="M10.200 9.200v4.600l3.600-2.300z" fill="#fff" />
    </>
  );
}

const PANEL_BTN = 'border border-black text-[13px] leading-4';

function Stepper({ title, value }: { title: string; value: string }) {
  return (
    <div className="flex flex-1 flex-col">
      <label htmlFor={title} className="flex h-5 items-center justify-center border border-black bg-[#c8c8c8] text-xs">{title}</label>
      <div className="-mt-px flex h-[21px]">
        <button aria-label={`${title} меньше`} className="w-5 border border-black bg-[#c8c8c8] text-[13px] leading-4">-</button>
        <input id={title} defaultValue={value} className="-mx-px w-0 flex-1 border border-black bg-[#e6e6e6] text-center text-[13px]" />
        <button aria-label={`${title} больше`} className="w-5 border border-black bg-[#c8c8c8] text-[13px] leading-4">+</button>
      </div>
    </div>
  );
}

function SwitchRow({ title, value, on }: { title: string; value: string; on: boolean }) {
  return (
    <div className="flex h-10">
      <button className={`w-10 border border-black text-xs ${on ? 'bg-[#1fb91f]' : 'bg-[#c8c8c8]'}`}>Вкл.</button>
      <div className="-mx-px flex flex-1"><Stepper title={title} value={value} /></div>
      <button className={`w-10 border border-black text-xs ${on ? 'bg-[#c8c8c8]' : 'bg-[#ea5032]'}`}>Выкл.</button>
    </div>
  );
}

function TradePanel() {
  return (
    <div className="absolute left-[26px] top-[22px] flex w-44 flex-col gap-[5px] border border-black bg-[#585858] p-1 font-['Roboto',sans-serif] text-black">
      <div className="flex h-[15px] gap-1">
        <div className="flex flex-1 items-center border border-black bg-[#c8c8c8] px-0.5">
          <div className="h-[9px] w-[108px] bg-[#6b8e23] text-center text-[8px] leading-[9px] font-bold text-[#7f7f7f]">ТАЙМЕР</div>
        </div>
        <button aria-label="Свернуть панель" className="w-[15px] border border-black bg-[#c8c8c8] text-xs leading-3">_</button>
        <button aria-label="Закрыть панель" className="w-[15px] border border-black bg-[#c8c8c8] text-xs leading-3">x</button>
      </div>
      <div className="grid grid-cols-2 gap-x-[11px] gap-y-[5px]">
        <div className={`flex h-[25px] items-center justify-center bg-[#c8e6c8] ${PANEL_BTN}`}>00:01:08</div>
        <div className={`flex h-[25px] items-center justify-center bg-[#c8c8c8] ${PANEL_BTN}`}>MESM20</div>
        <button className={`h-[30px] bg-[#c8c8c8] ${PANEL_BTN}`}>Buy MRKT</button>
        <button className={`h-[30px] bg-[#c8c8c8] ${PANEL_BTN}`}>Sell MRKT</button>
        <button className={`h-[30px] bg-[#64dc64] ${PANEL_BTN}`}>Buy LIMIT</button>
        <button className={`h-[30px] bg-[#fa96c8] ${PANEL_BTN}`}>Sell LIMIT</button>
        <button className={`h-[30px] bg-[#c8c8c8] ${PANEL_BTN}`}>Разворот</button>
        <button className={`h-[30px] bg-[#e69664] ${PANEL_BTN}`}>Закрыть</button>
      </div>
      <div className="flex h-10 gap-2.5">
        <Stepper title="Объем" value="3.00" />
        <button className="w-[60px] border border-black bg-[#c8c8c8] text-xl">БУ</button>
      </div>
      <SwitchRow title="Стоплосс" value="125" on />
      <SwitchRow title="Тейкпрофит" value="50" on />
      <SwitchRow title="Трейлинг" value="50" on={false} />
    </div>
  );
}

/* ---------- MetaTrader toolbars ---------- */
function Tool({ name, w = 'w-8', on, children }: { name: string; w?: string; on?: boolean; children: ReactNode }) {
  return (
    <button aria-label={name} className={`flex h-[26px] items-center justify-center ${w} ${on ? 'border border-[#90c8f6] bg-[#c0dcf3]' : ''}`}>
      <svg viewBox="0 0 20 20" className="h-5 w-5 shrink-0" fill="none">{children}</svg>
    </button>
  );
}

const Sep = () => <span className="mx-1 h-6 w-px bg-[#8e8e8e]" />;
const Grip = () => <span className="mr-1 ml-[3px] h-[22px] border-l-2 border-dotted border-[#b4b4b4]" />;
const Caret = () => <svg viewBox="0 0 7 4" className="mr-1 h-1 w-[7px]"><path d="M0 0h7L3.500 4z" fill="#222" /></svg>;
const Plus = () => (
  <>
    <circle cx="15" cy="15" r="4.800" fill="#35b535" stroke="#1c8a1c" strokeWidth=".6" />
    <path d="M15 12v6M12 15h6" stroke="#fff" strokeWidth="1.800" />
  </>
);
const Axes = () => (
  <>
    <path d="M3.500 1v17M1 17.500h18" stroke="#1c4fb4" strokeWidth="1.400" />
    <path d="M3.500 0l2 3h-4zM20 17.500l-3-2v4z" fill="#1c4fb4" />
  </>
);

function MainToolbar() {
  return (
    <div className="flex">
      <div className="flex h-[31px] items-center border-r border-b border-[#a0a0a0] pr-1 text-[11px]">
        <Grip />
        <Tool name="Новый график" w="w-[30px]"><rect x="1" y="2" width="17" height="14" fill="#fff" stroke="#2a7fd4" strokeWidth="1.400" /><path d="M1 3.500h17" stroke="#2a7fd4" strokeWidth="2" /><path d="M3 12V7M2.500 12l3-5 3 3 3-4 3 3 2-3" stroke="#2f9a2f" strokeWidth="1.300" /><Plus /></Tool>
        <Caret />
        <Tool name="Профили" w="w-[30px]"><rect x="6" y="1" width="13" height="10" fill="#fff" stroke="#2a9ae0" strokeWidth="1.400" /><path d="M6 2h13" stroke="#2a9ae0" strokeWidth="2" /><path d="M9 5l4 4 5-5" stroke="#2f9a2f" strokeWidth="1.300" /><rect x="1" y="8" width="13" height="10" fill="#fff" stroke="#2a7fd4" strokeWidth="1.400" /><path d="M1 9h13" stroke="#2a7fd4" strokeWidth="2" /><path d="M3 15l3-3 3 3 4-3" stroke="#2f9a2f" strokeWidth="1.300" /></Tool>
        <Caret />
        <Tool name="Обзор рынка" w="w-[30px]"><rect x="7" y="1" width="12" height="13" rx="1" fill="#d8ecff" stroke="#2a7fd4" strokeWidth="1.400" /><rect x="1" y="5" width="13" height="14" rx="1" fill="#f7c93c" stroke="#c08a10" /><path d="M10 9.500q-4-2-4 .5t4 2-4 3M7.800 7.500v9" stroke="#8a5a00" strokeWidth="1.300" /></Tool>
        <Sep />
        <Tool name="Навигатор" w="w-[30px]"><path d="M1 11L9 1l10 5-7 12z" fill="#f4c64a" stroke="#a87412" /><path d="M1 11l11 5v3L1 14z" fill="#fff4c8" stroke="#a87412" strokeWidth=".8" /><path d="M9 5l5 2.500-3 4.500-4-2z" stroke="#8a5a10" strokeWidth="1.300" /></Tool>
        <Tool name="Облако"><rect x="7" y="1" width="8" height="11" fill="#5ab4f0" stroke="#1c78c8" /><path d="M9 4h4M9 6.500h4" stroke="#fff" /><path d="M4 19q-4-1-3-4.500 1-2.500 4-2 1-3 5-2.500 3 .5 4 3 4-.5 5 2.500.5 3-3 3.500z" fill="#dff0ff" stroke="#5aa0dc" /></Tool>
        <Tool name="Сигналы"><circle cx="10" cy="10" r="2.500" fill="#2a6ad4" /><path d="M6.500 14q-3.500-4 0-8M13.500 6q3.500 4 0 8M4 16.500q-5.500-6.500 0-13M16 3.500q5.500 6.500 0 13" stroke="#5a94e0" strokeWidth="1.300" /></Tool>
        <Sep />
        <button className="flex h-[26px] items-center gap-1 border border-[#90c8f6] bg-[#c0dcf3] px-1">
          <svg viewBox="0 0 16 16" className="h-5 w-5"><HatIcon /></svg>
          Алготрейдинг
        </button>
        <button className="flex h-[26px] items-center gap-1 px-1.5">
          <svg viewBox="0 0 20 20" className="h-5 w-5" fill="none"><rect x="3" y="1" width="16" height="13" fill="#ffe066" stroke="#c89a1c" /><path d="M6 4.500h10M6 7.500h10M6 10.500h6" stroke="#b08410" /><path d="M1 3h3M1 6h3M1 9h3M1 12h3" stroke="#b08410" strokeWidth="1.500" /><Plus /></svg>
          Новый ордер
        </button>
        <Sep />
        <Tool name="Бары"><Axes /><path d="M9 4v11M6 12h3M9 6h2M15 2v10M12 10h3M15 4h3" stroke="#2f9a2f" strokeWidth="1.700" /></Tool>
        <Tool name="Свечи" w="w-[30px]" on><Axes /><path d="M8.500 3v12M14.500 3v12" stroke="#2f9a2f" /><rect x="7" y="6" width="3.500" height="7" fill="#dff5df" stroke="#2f9a2f" /><rect x="13" y="5" width="3.500" height="7" fill="#dff5df" stroke="#2f9a2f" /></Tool>
        <Tool name="Линия"><Axes /><path d="M4 13l5-6 4 4 4-5 2 2" stroke="#2f9a2f" strokeWidth="1.700" /></Tool>
        <Sep />
        <Tool name="Крупнее" w="w-[30px]"><circle cx="9" cy="7" r="6" fill="#d8ecff" stroke="#1c5fc4" strokeWidth="1.500" /><path d="M9 4v6M6 7h6" stroke="#1c5fc4" strokeWidth="1.300" /><path d="M12.500 11.500l4 6" stroke="#2a6ad4" strokeWidth="3" /></Tool>
        <Tool name="Мельче"><circle cx="9" cy="7" r="6" fill="#d8ecff" stroke="#1c5fc4" strokeWidth="1.500" /><path d="M6 7h6" stroke="#1c5fc4" strokeWidth="1.300" /><path d="M12.500 11.500l4 6" stroke="#2a6ad4" strokeWidth="3" /></Tool>
        <Tool name="Плитка"><path d="M.7 1.700h8v7h-8zM11 1.700h8v7h-8zM.7 11h8v7h-8zM11 11h8v7h-8z" fill="#fff" stroke="#2a7fd4" strokeWidth="1.200" /><path d="M.7 2.500h8M11 2.500h8M.7 12h8M11 12h8" stroke="#2a7fd4" strokeWidth="2" /><path d="M2 7l2-2 2 2 2-2M12 7l2-2 2 2 2-2M2 16l2-2 2 2 2-2M12 16l2-2 2 2 2-2" stroke="#2f9a2f" /></Tool>
        <Sep />
        <Tool name="Автопрокрутка" w="w-[30px]" on><Axes /><path d="M18 2v13" stroke="#333" strokeWidth="1.300" /><path d="M6 8h6V5l5 4.500-5 4.500v-3H6z" fill="#5ac83c" stroke="#2f9a2f" strokeWidth=".7" /></Tool>
        <span className="w-0.5" />
        <Tool name="Сдвиг графика" w="w-[30px]" on><Axes /><path d="M11 2v13" stroke="#333" strokeWidth="1.300" /><path d="M19 8h-3V6l-4 3.500 4 3.500v-2h3z" fill="#5aa8f0" stroke="#1c5fc4" strokeWidth=".7" /></Tool>
        <Sep />
        <Tool name="Шаблоны" w="w-[30px]"><rect x="1" y="1" width="17" height="16" fill="#fff" stroke="#2a7fd4" strokeWidth="1.400" /><path d="M1 2h17" stroke="#2a7fd4" strokeWidth="2.500" /><path d="M4 5v10M4 12l4-5 3 2 3-4 3 3" stroke="#2f9a2f" strokeWidth="1.300" /><rect x="9" y="9" width="10.500" height="10.500" fill="#666" /><path d="M11.500 9.500h5v4h-5zM11 15.500h7v4h-7z" fill="#eee" /></Tool>
      </div>
      <div className="ml-auto flex items-center pr-1.5">
        <Tool name="Поиск по терминалу"><circle cx="12" cy="8" r="4.500" fill="#e4f0ff" stroke="#3a74d4" strokeWidth="1.600" /><path d="M8.500 11.500L4 16" stroke="#2a5fc4" strokeWidth="2.400" /></Tool>
        <Tool name="Чат"><ellipse cx="13.500" cy="7" rx="6" ry="5" fill="#f4f4f4" stroke="#999" /><path d="M17 11l1.500 4-4.500-3z" fill="#f4f4f4" stroke="#999" strokeWidth=".8" /><ellipse cx="5.500" cy="12" rx="5" ry="4" fill="#f4f4f4" stroke="#999" /><path d="M3 15l-1 4 4-3z" fill="#ddd" stroke="#999" strokeWidth=".8" /></Tool>
        <div className="ml-1.5 h-[15px] w-[42px] border border-[#7e7e7e] bg-[#d4d4d4]"><div className="h-full w-[13px] bg-linear-to-r from-[#3cc83c] to-[#2da02d]" /></div>
      </div>
    </div>
  );
}

function DrawToolbar() {
  return (
    <div className="flex">
      <div className="flex h-[31px] items-center border-r border-b border-[#a0a0a0] pr-1">
        <Grip />
        <Tool name="Указатель" w="w-[30px]" on><path d="M7 3v12l3-3 2 5 2-1-2-5h4z" fill="#777" stroke="#555" strokeWidth=".6" /></Tool>
        <Tool name="Перекрестие"><path d="M10 0v7M10 13v7M0 10h7M13 10h7M9.500 10h1" stroke="#555" strokeWidth="1.400" /></Tool>
        <Sep />
        <Tool name="Вертикальная линия" w="w-[30px]"><path d="M10 3v14" stroke="#555" strokeWidth="1.400" /></Tool>
        <Tool name="Горизонтальная линия"><path d="M3 10h14" stroke="#555" strokeWidth="1.400" /></Tool>
        <Tool name="Трендовая линия"><path d="M4 16L16 4" stroke="#555" strokeWidth="1.400" /></Tool>
        <Tool name="Канал"><path d="M0 18L17 3M1 10L13 0M5 8v9M9 4v9M13 1v9M3 13h3M7 8h3M11 5h3" stroke="#666" strokeWidth="1.200" /><path d="M14.500 12h5M14.500 15.500h4M14.500 19h5M14.500 12v7" stroke="#000" strokeWidth="1.600" /></Tool>
        <Tool name="Фибоначчи"><path d="M3 2h14M3 5h14M3 8h14M3 11h8" stroke="#555" strokeDasharray="1 1" /><path d="M13 12.500h5M13 16h4M13.500 12v8" stroke="#000" strokeWidth="1.600" /></Tool>
        <Tool name="Текст"><path d="M3.500 3.500h13v13h-13z" stroke="#444" strokeDasharray="1 1" /><path d="M6 6.500h8M10 6v8M8 14h4M6 6v2M14 6v2" stroke="#333" strokeWidth="1.300" /></Tool>
        <Tool name="Фигура"><rect x="3.500" y="4.500" width="13" height="11" fill="#bcbcbc" stroke="#777" /></Tool>
        <Tool name="Объекты"><path d="M3 7l3-4 3 4-3-1zM3 12l4 3 5-6M8 14l8-9M12 13h5l-2.500 4zM13 10l3 2" stroke="#666" /></Tool>
        <Caret />
      </div>
    </div>
  );
}

const MENU = ['Файл', 'Вид', 'Вставка', 'Графики', 'Сервис', 'Окно', 'Справка'];
const PERIODS = ['M1', 'M5', 'M15', 'M30', 'H1', 'H4', 'D1', 'W1', 'MN'];
const HEADS = ['Символ', 'Тикет', 'Тип', 'Объем', 'Цена', 'S / L', 'T / P', 'Время', 'Цена', 'Комиссия', 'Прибыль', 'Изменение'];
const WIDTHS = ['w-[123px]', 'w-[84px]', 'w-[66px]', 'w-[58px]', 'w-[94px]', 'w-[96px]', 'w-[94px]', 'w-[95px]', 'w-[140px]', 'w-[96px]', 'w-[95px]', 'w-[116px]', 'w-[101px]'];

const money = (v: string) => (v.startsWith('-') ? 'text-[#ff0000]' : v.startsWith('0.00') ? '' : 'text-[#0000ff]');

function HistoryTable() {
  return (
    <table className="w-full table-fixed border-collapse text-right text-[11px] leading-[19px] whitespace-nowrap text-black">
      <colgroup>{WIDTHS.map((w, i) => <col key={i} className={w} />)}</colgroup>
      <thead>
        <tr className="h-[23px]">
          <th className="border-r border-[#e0e0e0] pl-[5px] text-left font-normal">Время</th>
          {HEADS.map((h, i) => (
            <th key={i} className="border-r border-[#e0e0e0] pr-[5px] font-normal">
              {h}{i === 0 && <svg viewBox="0 0 9 6" className="mr-1 ml-3 inline h-1.5 w-[9px]"><path d="M4.500 0L9 6H0z" fill="#333" /></svg>}
            </th>
          ))}
        </tr>
      </thead>
      <tbody>
        {TRADES.map(([open, ticket, type, price, sl, close, exit, profit, change, hit]) => (
          <tr key={ticket} className="h-5 border-b border-[#c4c4c4] even:bg-[#eaeaea] [&>td]:border-r [&>td]:border-[#d0d0d0] [&>td]:pr-[3px]">
            <td>
              <div className="flex items-center gap-[7px] pl-0.5">
                <svg viewBox="0 0 12 16" className="h-4 w-3" fill="none" stroke={type === 'sell' ? '#e0491e' : '#1c78b8'}>
                  <path d="M1.500 1h9.500v10.500L8 15H1V3z" fill={type === 'sell' ? '#fff0ea' : '#e4f3ff'} />
                  <path d="M3.500 4h5M3.500 6.500h5M3.500 9h5" />
                  <path d="M8 15v-3.500h3z" fill={type === 'sell' ? '#e0491e' : '#1c78b8'} />
                </svg>
                {open}
              </div>
            </td>
            <td>mesm20</td>
            <td>{ticket}</td>
            <td>{type}</td>
            <td>3</td>
            <td>{price}</td>
            <td className={hit ? 'bg-[#ff9f9f]' : ''}>{sl}</td>
            <td />
            <td>{close}</td>
            <td>{exit}</td>
            <td>-2.22</td>
            <td className={money(profit)}>{profit}</td>
            <td className={money(change)}>{change}</td>
          </tr>
        ))}
        <tr className="h-5 bg-[#c6c6c6] font-semibold">
          <td colSpan={10} className="text-left">
            <div className="flex items-center gap-[7px] pl-0.5">
              <svg viewBox="0 0 12 12" className="h-3 w-3" fill="none" stroke="#333"><circle cx="6" cy="6" r="5" /><path d="M3.500 6h5" /></svg>
              Прибыль: -28.86&nbsp; Кредит: 0.00&nbsp; Депозит: 0.00&nbsp; Снятие: 0.00&nbsp; Баланс: -28.86
            </div>
          </td>
          <td className="pr-1">-28.86</td>
          <td className="pr-1">0.00</td>
          <td />
        </tr>
      </tbody>
    </table>
  );
}

const BOTTOM_TABS: [string, string?][] = [
  ['Торговля'], ['Активы'], ['История'], ['Новости'], ['Почта', '7'], ['Календарь'], ['Компания'], ['Маркет'],
  ['Алерты'], ['Сигналы'], ['Статьи', '1'], ['Библиотека'], ['VPS'], ['Эксперты'], ['Журнал'],
];

function MetaWindow() {
  return (
    <section className={`flex flex-col bg-[#f0f0f0] text-xs text-black ${SEGOE}`}>
      <header className="flex h-[31px] items-center border-t border-[#222] bg-white pl-[9px]">
        <svg viewBox="0 0 16 16" className="mr-[5px] h-4 w-4">
          <path d="M1 10q-1 4 3 5l3-1-2-6z" fill="#3c9be0" /><path d="M5 3q3-5 6 0l1 4-5 2z" fill="#4ab04a" /><path d="M15 10q1 4-3 5l-4-1 3-6z" fill="#f0b41e" />
          <circle cx="8" cy="8.500" r="3.700" fill="#ffe27a" stroke="#d08a10" /><path d="M9.500 6.800h-2.500v1.600q2.500-.3 2.200 1.200-.4 1-2.200.6" fill="none" stroke="#b04a10" />
        </svg>
        <h1>1151279 - AMPGlobalEU-Demo: Демо-счет - Netting - [MESM20,M10]</h1>
        <div className="ml-auto flex items-center gap-9 pr-[18px]">
          <button aria-label="Свернуть терминал"><svg viewBox="0 0 10 10" className="h-2.5 w-2.5"><path d="M0 5.500h10" stroke="#000" /></svg></button>
          <button aria-label="Развернуть терминал"><svg viewBox="0 0 10 10" className="h-2.5 w-2.5"><path d="M.5.5h9v9h-9z" fill="none" stroke="#000" /></svg></button>
          <button aria-label="Закрыть терминал"><svg viewBox="0 0 10 10" className="h-2.5 w-2.5"><path d="M0 0l10 10M10 0L0 10" stroke="#000" /></svg></button>
        </div>
      </header>
      <nav className="flex h-[21px] items-center border-b border-[#a0a0a0] pl-[5px]">
        <svg viewBox="0 0 17 17" className="mr-px h-[17px] w-[17px]" fill="none"><rect x=".5" y=".5" width="13" height="13" fill="#fff" stroke="#2a7fd4" /><rect x="3.500" y="3.500" width="13" height="13" fill="#fff" stroke="#1c6fd0" /><path d="M4 5h12" stroke="#2a9ae0" strokeWidth="3" /><path d="M5 14l3-4 2 3 3-4 2 3" stroke="#f0642a" strokeWidth="1.300" /></svg>
        {MENU.map((m) => <button key={m} className="px-2.5 leading-5"><u>{m[0]}</u>{m.slice(1)}</button>)}
        <div className="ml-auto flex gap-0.5">
          <button aria-label="Свернуть график" className="h-[18px] w-[17px] border border-[#e2e2e2] bg-white"><svg viewBox="0 0 15 16" className="block"><path d="M4 10h6v2H4z" fill="#7a8796" /></svg></button>
          <button aria-label="Восстановить график" className="h-[18px] w-[17px] border border-[#e2e2e2] bg-white"><svg viewBox="0 0 15 16" className="block" fill="none" stroke="#7a8796" strokeWidth="1.300"><path d="M4 7.500h5v4H4zM6.500 7V4h5v4.500H9M6.500 4.500h5" /></svg></button>
          <button aria-label="Закрыть график" className="h-[18px] w-[17px] border border-[#e2e2e2] bg-white"><svg viewBox="0 0 15 16" className="block"><path d="M4.500 5l6 6M10.500 5l-6 6" stroke="#6a7786" strokeWidth="2.200" /></svg></button>
        </div>
      </nav>
      <MainToolbar />
      <DrawToolbar />
      <div className="flex border-b-2 border-[#7a7a7a] text-[11px]">
        <div className="flex h-[31px] items-center border-r border-[#a0a0a0] pr-0.5 text-[#444]">
          <Grip />
          {PERIODS.map((p) => <button key={p} className="w-8 pr-0.5 text-center">{p}</button>)}
        </div>
      </div>

      <div className="relative">
        <MetaChart />
        <TradePanel />
      </div>

      <div className="flex h-[22px] pt-0.5 pl-1">
        <button className="h-5 w-[98px] border border-t-0 border-black bg-white text-[11px] leading-4">MESM20,M10</button>
        <div className="flex flex-1 items-center border-t border-black">
          <button className="px-3 text-[11px] text-[#777]">EPM20,Daily</button>
          <div className="ml-auto flex gap-4 pr-3">
            <button aria-label="Назад"><svg viewBox="0 0 4 7" className="h-[7px] w-1"><path d="M4 0v7L0 3.500z" fill="#999" /></svg></button>
            <button aria-label="Вперед"><svg viewBox="0 0 4 7" className="h-[7px] w-1"><path d="M0 0v7l4-3.500z" fill="#999" /></svg></button>
          </div>
        </div>
      </div>

      <div className="flex flex-1 pt-[3px] pl-0.5">
        <aside className="flex w-[14px] flex-col">
          <button aria-label="Закрыть инструменты" className="flex h-3.5 items-center justify-center"><svg viewBox="0 0 6 6" className="h-1.5 w-1.5"><path d="M0 0l6 6M6 0L0 6" stroke="#000" strokeWidth="1.500" /></svg></button>
          <div className="flex flex-1 rotate-180 items-start bg-linear-to-r from-[#b9d1ea] to-[#a4bcd8] py-0.5 text-[10px] leading-[14px] font-semibold [writing-mode:vertical-rl]">Инструменты</div>
        </aside>
        <div className="mr-1 flex flex-1 flex-col">
          <div className="flex-1 border-t border-r border-l border-[#a0a0a0] bg-white">
            <HistoryTable />
          </div>
          <nav className="flex h-[21px] items-stretch text-[11px] text-[#6d6d6d]">
            {BOTTOM_TABS.map(([t, n], i) =>
              t === 'История' ? (
                <button key={t} className="border border-t-0 border-black bg-white px-2.5 text-black">{t}</button>
              ) : (
                <span key={t} className="flex items-center border-t border-black">
                  <button className="px-2.5">{t}{n && <sub className="pl-0.5 text-[10px] text-[#ff0000]">{n}</sub>}</button>
                  {i !== 1 && i !== BOTTOM_TABS.length - 1 && <span className="h-3.5 w-px bg-[#7a7a7a]" />}
                </span>
              ),
            )}
            <div className="flex flex-1 items-center justify-end border-t border-black pr-4">
              <button className="text-black">Тестер стратегий</button>
            </div>
          </nav>
          <div className="h-1" />
        </div>
      </div>

      <footer className="flex h-6 items-center border-t border-[#a8a8a8] text-[11px] [&>span]:flex [&>span]:h-[18px] [&>span]:items-center [&>span]:border-l [&>span]:border-[#b8b8b8] [&>span]:pl-[5px]">
        <p className="flex-1 pl-[3px]">Для вызова справки нажмите F1</p>
        <span className="w-32">CME_Scalping</span>
        <span className="w-[98px]" />
        <span className="w-[71px]" />
        <span className="w-[71px]" />
        <span className="w-[68px]" />
        <span className="w-[70px]" />
        <span className="w-[66px]" />
        <span className="w-[121px] gap-1">
          <svg viewBox="0 0 16 16" className="h-4 w-4"><path d="M2 1l7-1 3 2v12l-8 1-2-1z" fill="#2a9ae8" /><path d="M4 3h6M4 5.500h6M4 8h6" stroke="#bfe4ff" /><circle cx="11.500" cy="12" r="3.800" fill="#35b535" /><path d="M11.500 9.800v4.400M9.300 12h4.400" stroke="#fff" strokeWidth="1.300" /></svg>
          7602 / 11 Kb
        </span>
      </footer>
    </section>
  );
}

export default function App() {
  return (
    <div className="grid min-h-screen grid-cols-2 bg-black">
      <div className="relative flex min-w-0 flex-col">
        <div className="h-0.5 bg-linear-to-r from-[#8a8a2a] via-[#4c4c10] to-[#9a9410]" />
        <NinjaWindow interval="10 Минута" className="border-b" thumb="w-[55px]">
          <FootprintChart />
        </NinjaWindow>
        <div className="h-[5px] bg-black pt-0.5">
          <div className="h-[3px] bg-linear-to-r from-[#111] from-20% via-[#5a4a1a] via-60% to-[#d88a20]" />
        </div>
        <NinjaWindow interval="15 Секунда" className="flex-1 border-l" thumb="w-[15px]">
          <SecondsChart />
        </NinjaWindow>
        {/* mouse pointer */}
        <svg viewBox="0 0 12 20" className="absolute top-0 left-0 h-5 w-3"><path d="M0 0l10 13.500H5.500l2 5-2.500 1-2-5L0 17z" fill="#fff" stroke="#000" strokeWidth=".8" /></svg>
      </div>
      <MetaWindow />
    </div>
  );
}
